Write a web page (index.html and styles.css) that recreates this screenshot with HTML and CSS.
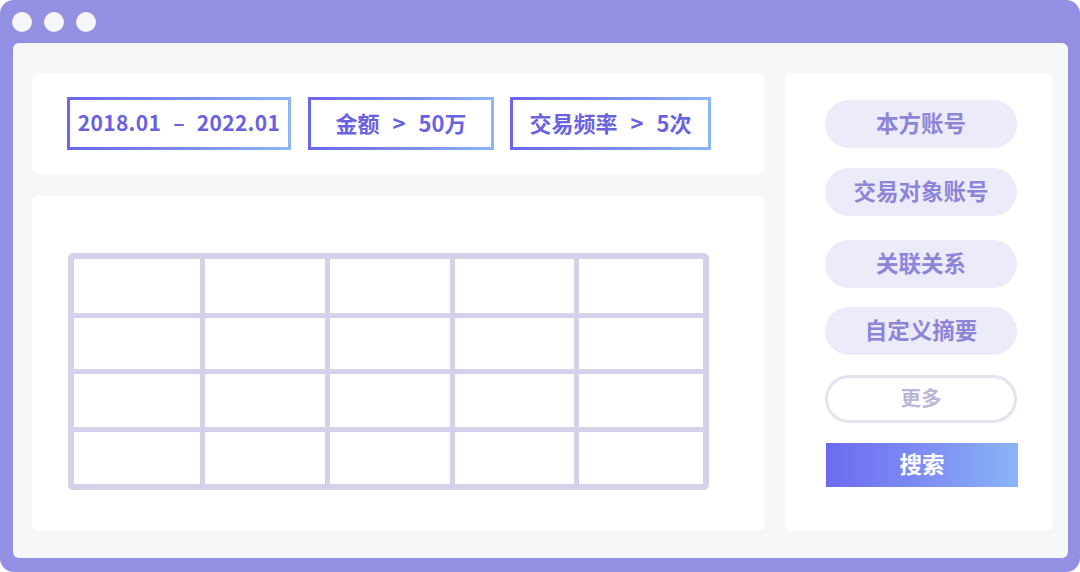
FILE: index.html
```html
<!DOCTYPE html>
<html lang="zh">
<head>
<meta charset="utf-8">
<link rel="stylesheet" href="styles.css">
</head>
<body>
<div class="frame">
  <div class="titlebar">
    <span class="dot"></span><span class="dot"></span><span class="dot"></span>
  </div>
  <div class="panel">
    <div class="leftcol">
      <div class="card filters">
        <div class="tag t1">2018.01<span class="op">–</span>2022.01</div>
        <div class="tag t2">金额<span class="op">&gt;</span>50万</div>
        <div class="tag t3">交易频率<span class="op">&gt;</span>5次</div>
      </div>
      <div class="card tablecard">
        <div class="grid">
          <div class="cell"></div><div class="cell"></div><div class="cell"></div><div class="cell"></div><div class="cell"></div>
          <div class="cell"></div><div class="cell"></div><div class="cell"></div><div class="cell"></div><div class="cell"></div>
          <div class="cell"></div><div class="cell"></div><div class="cell"></div><div class="cell"></div><div class="cell"></div>
          <div class="cell"></div><div class="cell"></div><div class="cell"></div><div class="cell"></div><div class="cell"></div>
        </div>
      </div>
    </div>
    <div class="card side">
      <div class="pill b1">本方账号</div>
      <div class="pill b2">交易对象账号</div>
      <div class="pill b3">关联关系</div>
      <div class="pill b4">自定义摘要</div>
      <div class="more">更多</div>
      <div class="search">搜索</div>
    </div>
  </div>
</div>
</body>
</html>
```

FILE: styles.css
```css
* { box-sizing: border-box; }
html, body { margin: 0; padding: 0; background: #ffffff; }
body {
  width: 1080px;
  height: 572px;
  font-family: "Noto Sans CJK SC", "Noto Sans", sans-serif;
  overflow: hidden;
}
.frame {
  width: 1080px;
  height: 572px;
  background: #938fe2;
  border-radius: 14px;
  padding: 0 12px 14px 13px;
  display: flex;
  flex-direction: column;
}
.titlebar {
  height: 43px;
  display: flex;
  align-items: flex-start;
  padding-top: 12px;
  gap: 12px;
}
.dot {
  width: 20px;
  height: 20px;
  border-radius: 50%;
  background: #f4f6f9;
}
.titlebar .dot:first-child { margin-left: -1px; }
.panel {
  flex: 1;
  background: #f5f7f8;
  border-radius: 6px;
  padding: 30px 16px 27px 19px;
  display: flex;
  gap: 21px;
}
.leftcol {
  width: 732px;
  display: flex;
  flex-direction: column;
  gap: 22px;
}
.card {
  background: #ffffff;
  border-radius: 6px;
}
.filters {
  height: 101px;
  padding: 24px 0 0 35px;
  display: flex;
  align-items: flex-start;
}
.tag {
  height: 53px;
  border: 3px solid;
  border-image: linear-gradient(90deg, #6a66ee 0%, #7c8cf2 55%, #8cb6f8 100%) 1;
  display: flex;
  align-items: center;
  justify-content: center;
  padding-bottom: 4px;
  color: #6a63df;
  font-weight: 700;
  font-size: 22px;
  white-space: nowrap;
}
.op { margin: 0 13px; }
.t1 { width: 224px; font-size: 21px; letter-spacing: 0.3px; }
.t1 .op { margin: 0 12px; }
.t2 { width: 186px; margin-left: 17px; }
.t3 { width: 201px; margin-left: 16px; }
.tablecard {
  flex: 1;
  padding: 57px 0 0 36px;
}
.grid {
  width: 641px;
  display: grid;
  grid-template-columns: 126px 120px 120px 119px 124px;
  grid-template-rows: 54px 51px 53px 52px;
  gap: 5px;
  padding: 6px;
  background: #d4d2ea;
  border-radius: 5px;
}
.cell { background: #ffffff; }
.side {
  flex: 1;
  padding: 27px 0 0 40px;
  display: flex;
  flex-direction: column;
  align-items: flex-start;
}
.pill {
  width: 192px;
  height: 48px;
  border-radius: 24px;
  background: #ecebfa;
  color: #8c85d8;
  font-weight: 700;
  font-size: 22.5px;
  padding-bottom: 4px;
  display: flex;
  align-items: center;
  justify-content: center;
}
.b2 { margin-top: 20px; }
.b3 { margin-top: 24px; }
.b4 { margin-top: 19px; }
.more {
  margin-top: 20px;
  width: 192px;
  height: 48px;
  border-radius: 24px;
  border: 3px solid #e4e3ef;
  background: #ffffff;
  color: #bab7d7;
  font-weight: 700;
  font-size: 20.5px;
  padding-bottom: 4px;
  display: flex;
  align-items: center;
  justify-content: center;
}
.search {
  margin-top: 20px;
  margin-left: 1px;
  width: 192px;
  height: 44px;
  background: linear-gradient(90deg, #6c6bf0 0%, #7f90f3 55%, #8ab5f8 100%);
  color: #ffffff;
  font-weight: 700;
  font-size: 22.5px;
  padding-bottom: 4px;
  display: flex;
  align-items: center;
  justify-content: center;
}
```
